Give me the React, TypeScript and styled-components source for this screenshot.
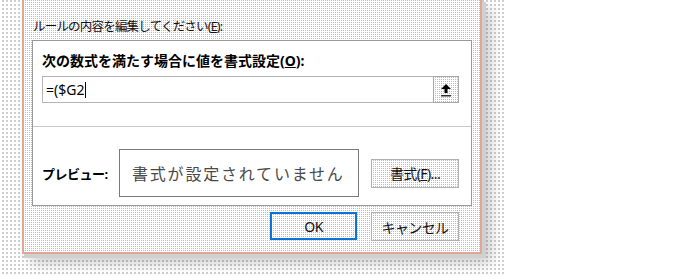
import React, { FC } from "react";
import styled, { createGlobalStyle } from "styled-components";

const GlobalStyle = createGlobalStyle`
  html, body {
    margin: 0;
    padding: 0;
    background: #ffffff;
  }
  body {
    font-family: "Noto Sans", "Noto Sans CJK JP", sans-serif;
    color: #000;
  }
`;

// dithered greys, the reference is a GIF-ish capture
const ditherLight = `conic-gradient(#bdbdbd 0 25%, #ffffff 0) 0 0 / 2px 2px`;
const ditherSparse = `conic-gradient(#cfcfcf 0 25%, #ffffff 0) 0 0 / 4px 4px`;

const Backdrop = styled.div`
  width: 506px;
  height: 274px;
  background: ${ditherSparse};
`;

const Dialog = styled.div`
  margin-left: 22px;
  width: 460px;
  height: 254px;
  box-sizing: border-box;
  border: 2px solid #e2a794;
  border-top: none;
  background: ${ditherLight};
  box-shadow: 3px 3px 0 1px #d0d0d0, 9px 9px 12px rgba(0, 0, 0, 0.2);
  padding: 18px 8px 0 8px;
  display: flex;
  flex-direction: column;
`;

const EditLabel = styled.div`
  font-size: 12.5px;
  letter-spacing: -0.8px;
  line-height: 18px;
  height: 18px;
  padding-left: 1px;
  color: #111;
`;

const Key = styled.span`
  text-decoration: underline;
`;

const Panel = styled.div`
  margin-top: 4px;
  width: 440px;
  height: 166px;
  box-sizing: border-box;
  border: 1px solid #9a9a9a;
  background: #ffffff;
  display: flex;
  flex-direction: column;
`;

const FormulaBlock = styled.div`
  padding: 10px 12px 0 9px;
  display: flex;
  flex-direction: column;
  gap: 5px;
`;

const Heading = styled.div`
  font-size: 14px;
  font-weight: 700;
  line-height: 20px;
  height: 20px;
`;

const FormulaInput = styled.div`
  height: 27px;
  box-sizing: border-box;
  border: 1px solid #b4b4b4;
  display: flex;
  align-items: stretch;
`;

const FormulaText = styled.div`
  flex: 1;
  display: flex;
  align-items: center;
  padding-left: 3px;
  font-size: 14px;
`;

const Caret = styled.span`
  display: inline-block;
  width: 1px;
  height: 16px;
  margin-left: 1px;
  background: #000;
`;

const CollapseButton = styled.div`
  width: 26px;
  box-sizing: border-box;
  border: 1px solid #a8a8a8;
  margin: -1px -1px -1px 0;
  background: ${ditherLight};
  display: flex;
  align-items: center;
  justify-content: center;
`;

const Separator = styled.div`
  margin-top: 23px;
  height: 1px;
  background: #c8c8c8;
`;

const PreviewRow = styled.div`
  margin-top: 22px;
  padding-left: 9px;
  display: flex;
  align-items: center;
`;

const PreviewLabel = styled.div`
  width: 77px;
  font-size: 13px;
  font-weight: 700;
  letter-spacing: -0.5px;
`;

const PreviewBox = styled.div`
  width: 240px;
  height: 48px;
  box-sizing: border-box;
  border: 1px solid #7a7a7a;
  padding-left: 12px;
  display: flex;
  align-items: center;
  font-size: 16px;
  letter-spacing: 1.8px;
  color: #4a4a4a;
  white-space: nowrap;
  overflow: hidden;
`;

const Button = styled.div<{ $primary?: boolean; $width: number }>`
  width: ${(p) => p.$width}px;
  height: ${(p) => (p.$primary ? 28 : 29)}px;
  box-sizing: border-box;
  border: ${(p) => (p.$primary ? "2px solid #0a74d8" : "1px solid #b0b0b0")};
  background: ${ditherLight};
  display: flex;
  align-items: center;
  justify-content: center;
  font-size: 14px;
  letter-spacing: -0.6px;
  color: #111;
`;

const FormatButton = styled(Button)`
  margin-left: 12px;
`;

const ButtonRow = styled.div`
  margin-top: 6px;
  padding-right: 13px;
  display: flex;
  justify-content: flex-end;
  gap: 14px;
`;

const UploadIcon: FC = () => (
  <svg width="12" height="14" viewBox="0 0 12 14">
    <path d="M6 1 L11 6 L7.5 6 L7.5 10 L4.5 10 L4.5 6 L1 6 Z" fill="#000" />
    <rect x="1" y="12" width="10" height="1.5" fill="#333" />
  </svg>
);

const App: FC = () => {
  return (
    <>
      <GlobalStyle />
      <Backdrop>
        <Dialog>
          <EditLabel>
            ルールの内容を編集してください(<Key>E</Key>):
          </EditLabel>
          <Panel>
            <FormulaBlock>
              <Heading>
                次の数式を満たす場合に値を書式設定(<Key>O</Key>):
              </Heading>
              <FormulaInput>
                <FormulaText>
                  =($G2
                  <Caret />
                </FormulaText>
                <CollapseButton>
                  <UploadIcon />
                </CollapseButton>
              </FormulaInput>
            </FormulaBlock>
            <Separator />
            <PreviewRow>
              <PreviewLabel>プレビュー:</PreviewLabel>
              <PreviewBox>書式が設定されていません</PreviewBox>
              <FormatButton $width={88}>
                書式(<Key>F</Key>)...
              </FormatButton>
            </PreviewRow>
          </Panel>
          <ButtonRow>
            <Button $primary $width={87}>
              OK
            </Button>
            <Button $width={88}>キャンセル</Button>
          </ButtonRow>
        </Dialog>
      </Backdrop>
    </>
  );
};

export default App;
